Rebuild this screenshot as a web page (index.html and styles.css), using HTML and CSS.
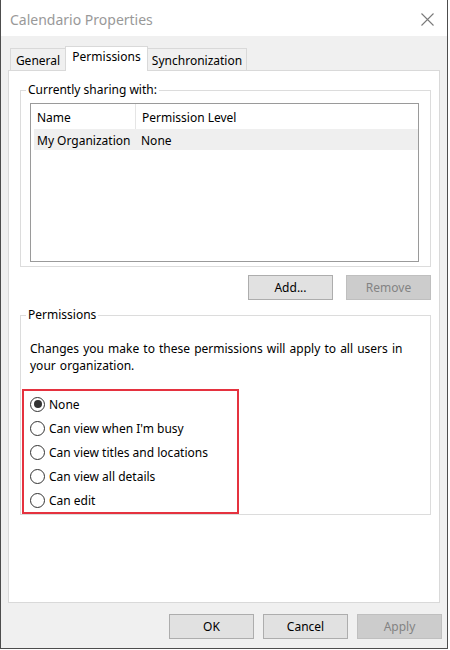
FILE: index.html
```html
<!DOCTYPE html>
<html>
<head>
<meta charset="utf-8">
<link rel="stylesheet" href="styles.css">
</head>
<body>
<div class="window">
  <div class="titlebar">
    <span class="title">Calendario Properties</span>
    <svg class="close" width="13" height="13" viewBox="0 0 13 13"><path d="M0.5 0.5 L12.5 12.5 M12.5 0.5 L0.5 12.5" stroke="#7a7a7a" stroke-width="1.1" fill="none"/></svg>
  </div>
  <div class="client">
    <div class="tabs">
      <div class="tab tab-general">General</div>
      <div class="tab tab-perm active">Permissions</div>
      <div class="tab tab-sync">Synchronization</div>
    </div>
    <div class="panel">
      <fieldset class="group group-share">
        <legend>Currently sharing with:</legend>
        <div class="list">
          <div class="list-head">
            <div class="col-name">Name</div>
            <div class="col-level">Permission Level</div>
          </div>
          <div class="list-row">
            <div class="col-name">My Organization</div>
            <div class="col-level">None</div>
          </div>
        </div>
      </fieldset>
      <div class="btn-row">
        <button class="btn">Add...</button>
        <button class="btn disabled">Remove</button>
      </div>
      <fieldset class="group group-perm">
        <legend>Permissions</legend>
        <p class="note">Changes you make to these permissions will apply to all users in your organization.</p>
        <div class="highlight">
          <label class="radio"><span class="dot checked"></span>None</label>
          <label class="radio"><span class="dot"></span>Can view when I'm busy</label>
          <label class="radio"><span class="dot"></span>Can view titles and locations</label>
          <label class="radio"><span class="dot"></span>Can view all details</label>
          <label class="radio"><span class="dot"></span>Can edit</label>
        </div>
      </fieldset>
    </div>
    <div class="footer">
      <button class="btn">OK</button>
      <button class="btn">Cancel</button>
      <button class="btn disabled">Apply</button>
    </div>
  </div>
</div>
</body>
</html>
```

FILE: styles.css
```css
* { box-sizing: border-box; }
html, body { margin: 0; padding: 0; background: #ffffff; }
body {
  font-family: "Noto Sans", "Open Sans", sans-serif;
  font-size: 12px;
  color: #000;
}
.window {
  width: 448px;
  height: 649px;
  border-left: 1px solid #4d4d4d;
  border-right: 1px solid #4d4d4d;
  border-bottom: 1px solid #4d4d4d;
  display: flex;
  flex-direction: column;
}
.titlebar {
  height: 36px;
  background: #fff;
  display: flex;
  align-items: center;
  justify-content: space-between;
  padding: 0 13px 0 9px;
}
.title {
  font-size: 14px;
  color: #999;
  margin-top: 2px;
}
.close { margin-top: 2px; }
.client {
  flex: 1;
  background: #f0f0f0;
  display: flex;
  flex-direction: column;
  padding: 10px 5px 9px 7px;
}
.tabs {
  display: flex;
  align-items: flex-end;
  height: 24px;
  padding-left: 2px;
}
.tab {
  height: 22px;
  border: 1px solid #d9d9d9;
  border-bottom: none;
  background: #f0f0f0;
  display: flex;
  align-items: center;
  justify-content: center;
  line-height: 1;
  padding-top: 2px;
}
.tab-general { width: 55px; border-right: none; }
.tab-perm { width: 83px; }
.tab-sync { width: 99px; border-left: none; }
.tab.active {
  height: 25px;
  background: #fff;
  margin-bottom: -1px;
  position: relative;
  z-index: 1;
  padding-top: 0;
  padding-bottom: 4px;
}
.panel {
  flex: 1;
  width: 432px;
  background: #fff;
  border: 1px solid #d9d9d9;
  padding: 10px 8px 0 11px;
  display: flex;
  flex-direction: column;
}
.group {
  margin: 0;
  border: 1px solid #dcdcdc;
  min-width: 0;
}
.group legend {
  line-height: 18px;
  height: 18px;
  padding: 0 2px;
  margin-left: -4px;
}
.group-share {
  padding: 4px 11px 4px 9px;
}
.list {
  height: 159px;
  border: 1px solid #9a9a9a;
  background: #fff;
}
.list-head {
  height: 25px;
  display: flex;
}
.list-head .col-name {
  width: 105px;
  border-right: 1px solid #e5e5e5;
  padding-left: 6px;
  padding-top: 2px;
  display: flex;
  align-items: center;
}
.list-head .col-level {
  padding-left: 6px;
  padding-top: 2px;
  display: flex;
  align-items: center;
}
.list-row {
  height: 21px;
  margin-left: 3px;
  background: #efefef;
  display: flex;
  align-items: center;
  padding-top: 1px;
}
.list-row .col-name { width: 102px; padding-left: 3px; }
.list-row .col-level { padding-left: 5px; }
.btn-row {
  display: flex;
  justify-content: flex-end;
  gap: 13px;
  margin-top: 8px;
}
.btn {
  width: 85px;
  height: 25px;
  background: #e1e1e1;
  border: 1px solid #adadad;
  font-family: inherit;
  font-size: 12px;
  color: #000;
  padding: 0;
  margin: 0;
}
.btn.disabled {
  background: #cccccc;
  border-color: #bfbfbf;
  color: #838383;
}
.group-perm {
  margin-top: 6px;
  padding: 16px 0 0 9px;
}
.note {
  margin: 0;
  line-height: 17px;
  word-spacing: 1px;
}
.highlight {
  margin-top: 15px;
  margin-left: -8px;
  width: 217px;
  height: 125px;
  border: 2px solid #e5323f;
  padding: 1px 0 0 6px;
  display: flex;
  flex-direction: column;
}
.radio {
  height: 24px;
  display: flex;
  align-items: center;
  gap: 4px;
}
.dot {
  width: 15px;
  height: 15px;
  border: 1px solid #333;
  border-radius: 50%;
  background: #fff;
  display: flex;
  align-items: center;
  justify-content: center;
}
.dot.checked::after {
  content: "";
  width: 8px;
  height: 8px;
  border-radius: 50%;
  background: #333;
}
.footer {
  display: flex;
  justify-content: flex-end;
  gap: 9px;
  margin-top: 11px;
}
.footer .btn { width: 85px; }
```
